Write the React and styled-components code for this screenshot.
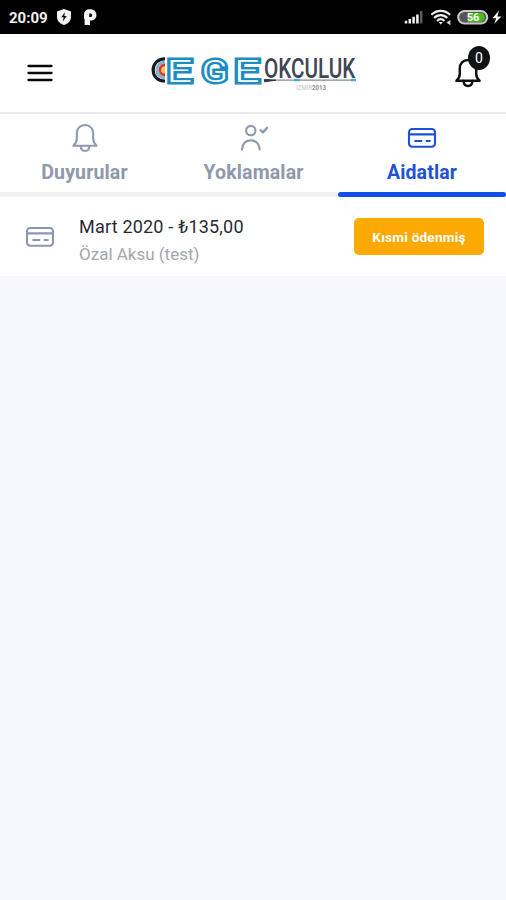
import React, { useState } from "react";
import styled, { createGlobalStyle } from "styled-components";

const tabs = [
  { id: "notices", label: "Duyurular", icon: BellIcon },
  { id: "attendance", label: "Yoklamalar", icon: UserCheckIcon },
  { id: "fees", label: "Aidatlar", icon: CardIcon },
];

const fees = [
  {
    id: 1,
    title: "Mart 2020 - ₺135,00",
    name: "Özal Aksu (test)",
    status: "Kısmi ödenmiş",
  },
];

function BellIcon({ width = 28, height = 30, strokeWidth = 2.1 }) {
  return (
    <svg width={width} height={height} viewBox="0 0 28 30" fill="none" stroke="currentColor" strokeWidth={strokeWidth} strokeLinecap="round" strokeLinejoin="round">
      <path d="M14 2C9 2 5.8 5.6 5.8 10.4V16C5.8 19.2 4.6 20.6 2.4 22.8H25.6C23.4 20.6 22.2 19.2 22.2 16V10.4C22.2 5.6 19 2 14 2Z" />
      <path d="M9.6 23C9.8 26 11.4 28 14 28C16.6 28 18.2 26 18.4 23" />
    </svg>
  );
}

function UserCheckIcon() {
  return (
    <svg width="28" height="28" viewBox="0 0 28 28" fill="none" stroke="currentColor" strokeWidth="2.1" strokeLinecap="round" strokeLinejoin="round">
      <circle cx="10.8" cy="6.6" r="4.7" />
      <path d="M2 25.4C2.6 19.6 5.8 16.4 10.8 16.4C15.8 16.4 19 19.6 19.6 25.4" />
      <path d="M20.6 6.2L23 8.4L27 3.8" strokeWidth="2.4" />
    </svg>
  );
}

function CardIcon() {
  return (
    <svg width="30" height="22" viewBox="0 0 30 22" fill="none" stroke="currentColor" strokeWidth="2.1">
      <rect x="2" y="2" width="26" height="17.8" rx="3.2" />
      <path d="M2 7.4H28M7.4 14H15.2M18.8 14H23.6" />
    </svg>
  );
}

function Logo() {
  return (
    <svg width="208" height="42" viewBox="0 0 208 42">
      {/* hedef tahtası */}
      <g fill="none" strokeWidth="3">
        <path d="M15 6.8C-0.8 6.8 -0.8 29 15 29" stroke="#17191d" strokeWidth="3.2" />
        <path d="M15 10C4.2 10 4.2 25.8 15 25.8" stroke="#78b7d4" />
        <path d="M15 13C8.4 13 8.4 22.8 15 22.8" stroke="#d93a35" />
        <path d="M15 16.2C12 16.2 12 19.6 15 19.6" stroke="#f3c53c" />
      </g>
      <g fill="#fff" stroke="#1c8cc4" strokeWidth="4.8" paintOrder="stroke" fontFamily="Roboto" fontWeight="300" fontSize="31">
        <text x="16.4" y="29.6" textLength="25.5" lengthAdjust="spacingAndGlyphs">E</text>
        <text x="51.4" y="29.6" textLength="26.5" lengthAdjust="spacingAndGlyphs">G</text>
        <text x="84" y="29.6" textLength="25.5" lengthAdjust="spacingAndGlyphs">E</text>
      </g>
      <g transform="translate(114 0) scale(0.72 1)">
        <text x="0" y="26" textLength="127" lengthAdjust="spacingAndGlyphs" fill="#3f4754" fontFamily="Roboto" fontWeight="500" fontSize="28.5">OKCULUK</text>
      </g>
      <path d="M115 28.2H205" stroke="#7f8995" strokeWidth="1.3" />
      <path d="M114.5 27.4L126 28.2L114.5 29.8Z" fill="#353b45" stroke="#353b45" />
      <path d="M144 28H150M201 28H206" stroke="#45a9de" strokeWidth="2.4" />
      <text x="146" y="38" textLength="30" lengthAdjust="spacingAndGlyphs" fill="#c4c6c9" fontFamily="Roboto" fontSize="7">
        İZMİR<tspan fill="#8d9095" fontWeight="700">2013</tspan>
      </text>
    </svg>
  );
}

function StatusIcons() {
  return (
    <svg width="100" height="20" viewBox="0 0 100 20">
      <path d="M3 16.4V13.8M6.8 16.4V12M10.6 16.4V9.8M14.4 16.4V7.4" stroke="#f2f2f2" strokeWidth="2.5" />
      <path d="M18.2 16.4V4" stroke="#5a5a5a" strokeWidth="2.5" />
      <g fill="none" stroke="#eee" strokeWidth="2.2">
        <path d="M28.4 7.8C33.6 2.6 41.8 2.6 47 7.8" />
        <path d="M31.2 11C34.8 7.2 40.6 7.2 44.2 11" />
        <path d="M34 13.9C36.2 11.6 39.2 11.6 41.4 13.9" />
      </g>
      <path d="M35.6 15H39.8L37.7 17.4Z" fill="#eee" />
      <path d="M47.4 13L43.4 15.6L47.4 18.2Z" fill="#ddd" />
      <rect x="55.2" y="4" width="29" height="12.6" rx="6.3" fill="#555" stroke="#c9c9c9" strokeWidth="2" />
      <path d="M65 5.8H77A4.5 4.5 0 0 1 77 14.9H65Z" fill="#48bd20" />
      <text x="70" y="14.2" textAnchor="middle" fill="#fff" fontFamily="Roboto" fontWeight="700" fontSize="11">56</text>
      <path d="M96 3.6L89.4 11.2H93.2L91 17L98.4 9.4H94.4Z" fill="#f4f4f4" />
    </svg>
  );
}

const App = () => {
  const [active, setActive] = useState("fees");

  return (
    <Screen>
      <GlobalStyle />
      <StatusBar>
        <StatusGroup>
          <Clock>20:09</Clock>
          <svg width="16" height="18" viewBox="0 0 16 18">
            <path d="M8 1L15 3.4V9C15 13 12 15.6 8 17C4 15.6 1 13 1 9V3.4Z" fill="#f4f4f4" />
            <path d="M9 4.3L5.2 9.3H7.6L6.8 13.4L10.8 8.1H8.3Z" fill="#111" />
          </svg>
          <PBadge width="15" height="18" viewBox="0 0 15 18">
            <path d="M1 7C1 3.2 3.5 1.2 7 1.2C11 1.2 13.4 3.4 13.4 7C13.4 10.8 10.6 12.8 7 12.6V17H1.6V11.5L1 10.4Z" fill="#f4f4f4" />
            <path d="M6.2 5.4H7.6C9.6 5.4 9.6 9 7.6 9H6.2Z" fill="#111" />
          </PBadge>
        </StatusGroup>
        <StatusIcons />
      </StatusBar>

      <Header>
        <MenuButton aria-label="Menü">
          <svg width="26" height="18" viewBox="0 0 26 18" stroke="#08080a" strokeWidth="2.3" strokeLinecap="round">
            <path d="M1.5 2H24.5M1.5 9H24.5M1.5 16H24.5" />
          </svg>
        </MenuButton>
        <Logo />
        <NotifyButton aria-label="Bildirimler">
          <BellIcon width={28} height={30} strokeWidth={2.5} />
          <Badge>0</Badge>
        </NotifyButton>
      </Header>

      <TabBar>
        {tabs.map(({ id, label, icon: Icon }) => (
          <Tab key={id} $active={active === id} onClick={() => setActive(id)}>
            <TabIcon>
              <Icon />
            </TabIcon>
            {label}
          </Tab>
        ))}
      </TabBar>

      {fees.map((fee) => (
        <FeeRow key={fee.id}>
          <FeeIcon>
            <CardIcon />
          </FeeIcon>
          <FeeInfo>
            <FeeTitle>{fee.title}</FeeTitle>
            <FeeName>{fee.name}</FeeName>
          </FeeInfo>
          <FeeStatus>{fee.status}</FeeStatus>
        </FeeRow>
      ))}
    </Screen>
  );
};

export default App;

const GlobalStyle = createGlobalStyle`
  * {
    box-sizing: border-box;
  }
  body {
    margin: 0;
    background-color: #f7f8fd;
    font-family: Roboto, "Noto Sans", sans-serif;
  }
  button {
    padding: 0;
    border: 0;
    background: none;
    font-family: inherit;
  }
  svg {
    display: block;
    flex-shrink: 0;
  }
`;

const Screen = styled.div`
  min-height: 100vh;
  background-color: #f7f8fd;
`;

// durum çubuğu
const StatusBar = styled.div`
  display: flex;
  align-items: center;
  justify-content: space-between;
  height: 34px;
  padding: 0 3px 0 9px;
  background-color: #000;
`;

const StatusGroup = styled.div`
  display: flex;
  align-items: center;
`;

const Clock = styled.div`
  width: 47px;
  color: #f2f2f2;
  font-size: 15px;
  font-weight: 700;
  line-height: 20px;
  padding-top: 1px;
`;

const PBadge = styled.svg`
  margin-left: 11px;
`;

const Header = styled.header`
  display: flex;
  align-items: center;
  justify-content: space-between;
  height: 80px;
  padding: 0 24px 0 27px;
  background-color: #fff;
  border-bottom: 2px solid #e9e9ea;
`;

const MenuButton = styled.button`
  color: #08080a;
`;

const NotifyButton = styled.button`
  position: relative;
  color: #111;
`;

const Badge = styled.span`
  position: absolute;
  top: -12px;
  right: -8px;
  width: 22px;
  height: 24px;
  border-radius: 50%;
  background-color: #121314;
  color: #fff;
  font-size: 14px;
  line-height: 24px;
  text-align: center;
`;

const TabBar = styled.nav`
  display: grid;
  grid-template-columns: 169px 169px 1fr;
  height: 83px;
  background-color: #fff;
  box-shadow: inset 0 -5px #f2f2f3;
`;

const Tab = styled.button`
  display: flex;
  flex-direction: column;
  align-items: center;
  padding-top: 8px;
  color: ${({ $active }) => ($active ? "#1e50d8" : "#8f98ad")};
  font-size: 19.5px;
  font-weight: 700;
  letter-spacing: 0.15px;
  line-height: 24px;

  &::after {
    content: "";
    width: 100%;
    height: 5px;
    margin-top: auto;
    border-radius: 3px;
    background-color: ${({ $active }) => ($active ? "#0f50ed" : "transparent")};
  }
`;

const TabIcon = styled.span`
  display: flex;
  align-items: center;
  height: 32px;
  margin-bottom: 7px;
`;

const FeeRow = styled.div`
  display: flex;
  align-items: center;
  height: 79px;
  padding: 0 22px 0 25px;
  background-color: #fff;
`;

const FeeIcon = styled.div`
  width: 54px;
  color: #8c96ae;
`;

const FeeInfo = styled.div`
  flex: 1;
  padding-top: 7px;
`;

const FeeTitle = styled.div`
  color: #292b33;
  font-size: 18px;
  letter-spacing: 0.2px;
  line-height: 28px;
`;

const FeeName = styled.div`
  color: #a3a6ad;
  font-size: 17px;
  line-height: 27px;
`;

const FeeStatus = styled.button`
  width: 130px;
  height: 37px;
  border-radius: 5px;
  background-color: #fca904;
  color: #fff;
  font-size: 13.5px;
  font-weight: 700;
  letter-spacing: 0.25px;
`;
